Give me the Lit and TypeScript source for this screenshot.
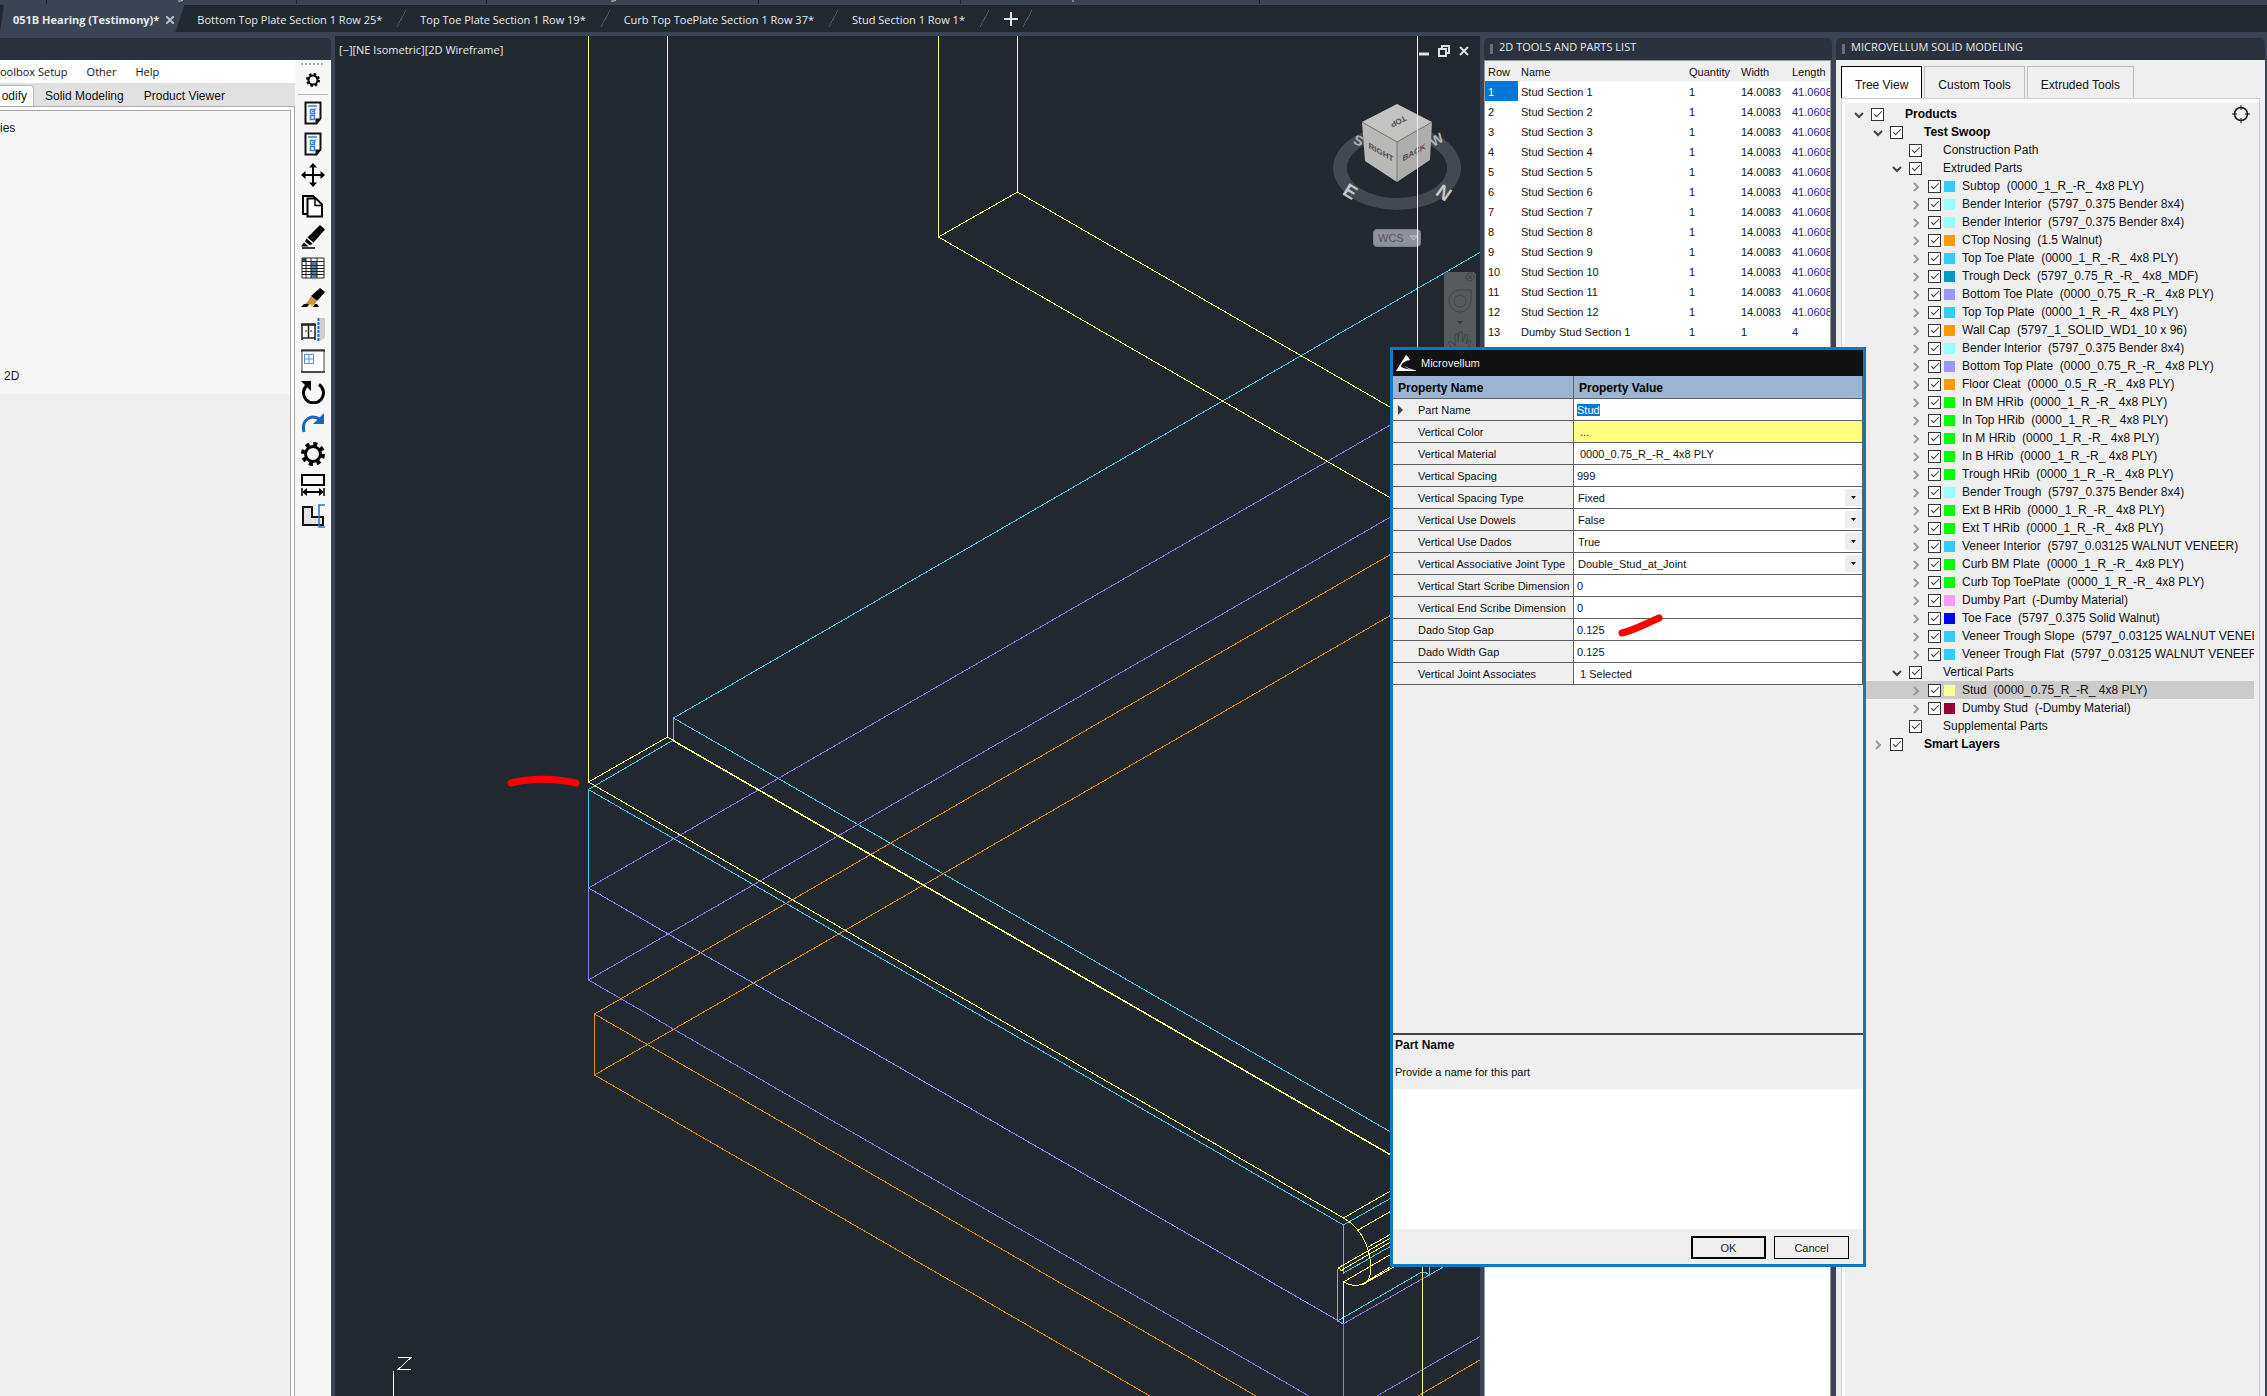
import { LitElement, html, css, svg, nothing } from "lit";
import { customElement, query } from "lit/decorators.js";
import { classMap } from "lit/directives/class-map.js";
import { styleMap } from "lit/directives/style-map.js";

/* ------------------------------------------------------------------ data */

const documents = [
  "Bottom Top Plate Section 1 Row 25*",
  "Top Toe Plate Section 1 Row 19*",
  "Curb Top ToePlate Section 1 Row 37*",
  "Stud Section 1 Row 1*",
];

type Part = [name: string, quantity: string, width: string, length: string];
const parts: Part[] = [
  ...Array.from({ length: 12 }, (_, i): Part => [`Stud Section ${i + 1}`, "1", "14.0083", "41.0608"]),
  ["Dumby Stud Section 1", "1", "1", "4"],
];

interface Node {
  level: number;
  label: string;
  color?: string;
  open?: boolean;
  leaf?: boolean;
  bold?: boolean;
  selected?: boolean;
}

const CYAN = "#33ccff";
const ICE = "#99ffff";
const ORANGE = "#ff9900";
const VIOLET = "#9999ff";
const GREEN = "#00ff00";
const part = (label: string, color: string, selected = false): Node => ({ level: 3, label, color, selected });

const tree: Node[] = [
  { level: 0, label: "Products", open: true, bold: true },
  { level: 1, label: "Test Swoop", open: true, bold: true },
  { level: 2, label: "Construction Path", leaf: true },
  { level: 2, label: "Extruded Parts", open: true },
  part("Subtop\u00a0 (0000_1_R_-R_ 4x8 PLY)", CYAN),
  part("Bender Interior\u00a0 (5797_0.375 Bender 8x4)", ICE),
  part("Bender Interior\u00a0 (5797_0.375 Bender 8x4)", ICE),
  part("CTop Nosing\u00a0 (1.5 Walnut)", ORANGE),
  part("Top Toe Plate\u00a0 (0000_1_R_-R_ 4x8 PLY)", CYAN),
  part("Trough Deck\u00a0 (5797_0.75_R_-R_ 4x8_MDF)", "#0099cc"),
  part("Bottom Toe Plate\u00a0 (0000_0.75_R_-R_ 4x8 PLY)", VIOLET),
  part("Top Top Plate\u00a0 (0000_1_R_-R_ 4x8 PLY)", CYAN),
  part("Wall Cap\u00a0 (5797_1_SOLID_WD1_10 x 96)", ORANGE),
  part("Bender Interior\u00a0 (5797_0.375 Bender 8x4)", ICE),
  part("Bottom Top Plate\u00a0 (0000_0.75_R_-R_ 4x8 PLY)", VIOLET),
  part("Floor Cleat\u00a0 (0000_0.5_R_-R_ 4x8 PLY)", ORANGE),
  part("In BM HRib\u00a0 (0000_1_R_-R_ 4x8 PLY)", GREEN),
  part("In Top HRib\u00a0 (0000_1_R_-R_ 4x8 PLY)", GREEN),
  part("In M HRib\u00a0 (0000_1_R_-R_ 4x8 PLY)", GREEN),
  part("In B HRib\u00a0 (0000_1_R_-R_ 4x8 PLY)", GREEN),
  part("Trough HRib\u00a0 (0000_1_R_-R_ 4x8 PLY)", GREEN),
  part("Bender Trough\u00a0 (5797_0.375 Bender 8x4)", ICE),
  part("Ext B HRib\u00a0 (0000_1_R_-R_ 4x8 PLY)", GREEN),
  part("Ext T HRib\u00a0 (0000_1_R_-R_ 4x8 PLY)", GREEN),
  part("Veneer Interior\u00a0 (5797_0.03125 WALNUT VENEER)", CYAN),
  part("Curb BM Plate\u00a0 (0000_1_R_-R_ 4x8 PLY)", GREEN),
  part("Curb Top ToePlate\u00a0 (0000_1_R_-R_ 4x8 PLY)", GREEN),
  part("Dumby Part\u00a0 (-Dumby Material)", "#ff99ff"),
  part("Toe Face\u00a0 (5797_0.375 Solid Walnut)", "#0000ff"),
  part("Veneer Trough Slope\u00a0 (5797_0.03125 WALNUT VENEER)", CYAN),
  part("Veneer Trough Flat\u00a0 (5797_0.03125 WALNUT VENEER)", CYAN),
  { level: 2, label: "Vertical Parts", open: true },
  part("Stud\u00a0 (0000_0.75_R_-R_ 4x8 PLY)", "#ffff99", true),
  part("Dumby Stud\u00a0 (-Dumby Material)", "#990033"),
  { level: 2, label: "Supplemental Parts", leaf: true },
  { level: 1, label: "Smart Layers", bold: true },
];

type Kind = "text" | "select" | "button" | "color";
const properties: [label: string, kind: Kind, value: string][] = [
  ["Part Name", "text", "Stud"],
  ["Vertical Color", "color", "..."],
  ["Vertical Material", "button", "0000_0.75_R_-R_ 4x8 PLY"],
  ["Vertical Spacing", "text", "999"],
  ["Vertical Spacing Type", "select", "Fixed"],
  ["Vertical Use Dowels", "select", "False"],
  ["Vertical Use Dados", "select", "True"],
  ["Vertical Associative Joint Type", "select", "Double_Stud_at_Joint"],
  ["Vertical Start Scribe Dimension", "text", "0"],
  ["Vertical End Scribe Dimension", "text", "0"],
  ["Dado Stop Gap", "text", "0.125"],
  ["Dado Width Gap", "text", "0.125"],
  ["Vertical Joint Associates", "button", "1 Selected"],
];

/* ----------------------------------------------------------------- icons */

const sheet = svg`
  <path d="M4.500 1.500h15v16l-4 5h-11z" fill="#fff" stroke="#111" stroke-width="2"/>
  <path d="M14.500 22.500v-5h5z" fill="#111"/>
  <path d="M7 5h9" stroke="#3b7fd4" stroke-width="1.500"/>
  <path d="M9.500 8.500h4v4h-4zM9.500 14.500h4v4h-4z" fill="none" stroke="#3b7fd4" stroke-width="1.500"/>
  <path d="M11 10l1 1 3-3.500" fill="none" stroke="#3b7fd4"/>`;

const toolIcons: [label: string, icon: unknown][] = [
  ["Product list", sheet],
  ["Part list", sheet],
  ["Move", svg`<path d="M12 2v20M2 12h20" stroke="#000" stroke-width="2"/>
    <path d="M12 0l4 4.500H8zM12 24l4-4.500H8zM0 12l4.500-4v8zM24 12l-4.500-4v8z"/>`],
  ["Copy", svg`<path d="M6 20H2V2h10l3 3" fill="none" stroke="#000" stroke-width="2"/>
    <path d="M6.500 4.500h8.500l6 6v12H6.500z" fill="#fff" stroke="#000" stroke-width="2"/>
    <path d="M14 5v6.500h7" fill="none" stroke="#000" stroke-width="1.500"/>`],
  ["Mark", svg`<path d="M19 0l5 4.500L12.500 17.500l-6-5z"/>
    <path d="M5.500 13.500l6 5-2.500 2-5-4z"/><path d="M3 17.500l4.500 4H0z"/>
    <path d="M1 23h13" stroke="#000" stroke-width="1.500"/>`],
  ["Table", svg`<path d="M1 2h22v20H1z" fill="#fff" stroke="#222"/>
    <path d="M10 5h6v17h-6z" fill="#5579a8"/>
    <path d="M1 2h4v3H1z" fill="#1f5a2d"/>
    <path d="M1 5.500h22M1 9.500h22M1 12.500h22M1 15.500h22M1 18.500h22M5 2v20M10 2v20M16 2v20" stroke="#222"/>`],
  ["Clean", svg`<path d="M19 1l5 4-8 9-6-5z"/>
    <path d="M10 9l6 5-3 4-9-1c3-2 4-5 6-8z" fill="#d98f3a"/>
    <path d="M0 20l3-3h5l-2 3zM12 20l2-3h2l2 3z"/><path d="M8 18l-1 2M11 18v2" stroke="#d98f3a"/>`],
  ["Cabinet", svg`<path d="M1 6h13v14H1zM7.500 6v14M0 7h15M1 20v2M14 20v2" fill="none" stroke="#222" stroke-width="1.500"/>
    <path d="M5 12v2M10 12v2" stroke="#222"/><path d="M19 0h5v20l-5 3z" fill="#cfcfcf"/>
    <path d="M17.500 0v24" stroke="#0d66b8" stroke-width="2" stroke-dasharray="3 1"/>`],
  ["Elevation", svg`<path d="M1 1h22v22H1z" fill="#fff" stroke="#444"/><path d="M0 1.500h24" stroke="#333" stroke-width="2"/>
    <path d="M0 23h24" stroke="#333" stroke-width="1.500"/>
    <path d="M3.500 5.500h9v9h-9zM8 5.500v9M3.500 10h9" fill="none" stroke="#4d93dd"/>`],
  ["Refresh", svg`<path d="M7 4.500A10 10 0 1 0 18 4.500" fill="none" stroke="#000" stroke-width="3"/>
    <path d="M0 1h10v10z"/>`],
  ["Redo", svg`<path d="M3 21C0 9 10 2 20 9" fill="none" stroke="#1a66bb" stroke-width="3"/>
    <path d="M23 2v11H12z" fill="#1a66bb"/>`],
  ["Options", svg`<circle cx="12" cy="12" r="7.500" fill="none" stroke="#000" stroke-width="3"/>
    <circle cx="12" cy="12" r="10" fill="none" stroke="#000" stroke-width="4" stroke-dasharray="4 3.854"/>`],
  ["Dimension", svg`<path d="M1 2h22v10H1z" fill="none" stroke="#000" stroke-width="2"/>
    <path d="M1 15v8M23 15v8" stroke="#000" stroke-width="1.500"/><path d="M3 19h18" stroke="#000" stroke-width="2"/>
    <path d="M1 19l5-4v8zM23 19l-5-4v8z"/>`],
  ["Extents", svg`<path d="M2 3h9v10h11v8H2z" fill="#e2e2e2" stroke="#111" stroke-width="2"/>
    <path d="M24 1h-6v22h6" fill="none" stroke="#2a74bd" stroke-width="1.500"/>`],
];

const wireframe = svg`
  <g class="wire violet">
    <path d="M588.500 888V980M588.500 888L1480 373.200M588.500 980L1480 465.300M588.500 980L1309 1396"/>
    <path d="M1343.500 1324V1396M1343 1324L1445 1266M1377 1396L1480 1336.500"/>
    <path class="bright" d="M588.500 888L1337 1320L1343 1324"/>
  </g>
  <g class="wire orange">
    <path d="M594.500 1014V1075M594.500 1014L1480 502.800M594.500 1075L1480 563.700"/>
    <path d="M594.500 1014L1256 1396M594.500 1075L1150 1396M1418 1396L1480 1360"/>
  </g>
  <g class="wire cyan">
    <path d="M673.500 740V718L1480 252.400M673.500 718L1400 1137.400M673.500 740L588.500 789.500V888"/>
    <path d="M588.500 789.500L1343.500 1225L1400 1193M1343.500 1225V1273L1400 1241"/>
    <path d="M1337.500 1269V1321L1420 1273L1425 1272L1429.500 1275V1260M1429.500 1275L1445 1266"/>
  </g>
  <g class="wire yellow">
    <path d="M588.500 36V782L667.500 737V36M938.500 36V237L1017.500 192V36"/>
    <path d="M938.500 237L1400 503.400M1017.500 192L1400 412.800M1417.500 36V360M1422.500 1260V1396"/>
    <path d="M588.500 782L1343.500 1218L1400 1185.500"/>
    <path d="M667.500 737L1400 1160M673 740.800L1400 1160.600"/>
    <path d="M1343.500 1218C1362 1228 1373 1251 1370 1275L1368 1281"/>
    <path d="M1358 1230L1400 1206M1338 1268L1400 1232.500M1340 1271L1400 1236.500M1368 1247L1400 1229"/>
    <path d="M1338 1268L1343 1271M1343.500 1323V1282C1352 1287 1360 1287 1369 1280L1400 1261M1343.500 1282L1400 1249M1362 1285L1400 1263.500"/>
  </g>
  <path class="ucs" d="M393.500 1371V1396M398 1357.500H411L398 1369.500H411"/>
  <path class="marker" d="M511 783C530 778 555 778 576 783"/>`;

const viewCube = svg`
  <path fill-rule="evenodd" fill="#434951"
    d="M0 64a64 42 0 1 0 128 0a64 42 0 1 0-128 0zM14 64a50 30 0 1 1 100 0a50 30 0 1 1-100 0z"/>
  <g fill="#b0b2b5" font-size="14" font-weight="700" text-anchor="middle">
    <text transform="translate(24 41) rotate(20)">S</text>
    <text transform="translate(106 40) rotate(-30)">W</text>
  </g>
  <path d="M29 18L64 38V78L32 57z" fill="#b9b9b8"/>
  <path d="M99 18L64 38V78L97 56z" fill="#adadac"/>
  <path d="M64 0L99 18L64 38L29 18z" fill="#c3c3c2"/>
  <path d="M29 18L64 38L99 18M64 38V78" fill="none" stroke="#77797b"/>
  <g fill="#4b4d50" font-size="8" font-weight="700" text-anchor="middle">
    <text transform="translate(48 51) skewY(29)">RIGHT</text>
    <text transform="translate(81 51) skewY(-29)">BACK</text>
    <text transform="translate(64 15) rotate(152)">TOP</text>
  </g>
  <g fill="#c4c6c8" font-size="19" font-weight="700" text-anchor="middle">
    <text transform="translate(14 93) rotate(32)">E</text>
    <text transform="translate(107 94) rotate(36)">N</text>
  </g>`;

/* -------------------------------------------------------------- elements */

@customElement("property-dialog")
export class PropertyDialog extends LitElement {
  @query("#property-0") first!: HTMLInputElement;

  static styles = css`
    :host {
      display: flex;
      flex-direction: column;
      box-sizing: border-box;
      border: 3px solid #1278bd;
      background: #efefef;
      color: #111;
      font: 11px/16px "Liberation Sans", Arial, sans-serif;
    }
    .title {
      display: flex;
      align-items: center;
      gap: 5px;
      height: 26px;
      padding-left: 3px;
      background: #121212;
      color: #eee;
    }
    .title h2 { margin: 0; font-size: 11px; font-weight: 400; }
    table { width: 100%; border-collapse: separate; border-spacing: 0; table-layout: fixed; }
    .name { width: 181px; }
    th, td { box-sizing: border-box; height: 22px; padding: 0; border: solid #5f5f5f; border-width: 0 1px 1px 0; }
    thead th { height: 23px; padding: 1px 0 0 5px; background: #9ab4d2; text-align: left; font-size: 12px; color: #000; }
    tbody th { text-align: left; font-weight: 400; white-space: nowrap; }
    tbody td { background: #fff; }
    .label { display: flex; align-items: center; }
    .mark { width: 20px; height: 10px; padding-right: 5px; box-sizing: content-box; }
    .field { display: grid; grid-template-columns: 1fr; align-items: center; height: 21px; }
    .field > * { grid-area: 1 / 1; }
    input, select, .value {
      box-sizing: border-box;
      width: 100%;
      height: 21px;
      margin: 0;
      padding: 0 3px;
      border: 0;
      border-radius: 0;
      outline: 0;
      background: none;
      color: inherit;
      font: inherit;
      text-align: left;
      appearance: none;
    }
    select { padding-left: 4px; }
    .value { padding-left: 6px; }
    .color .value { background: #ffff80; }
    input::selection { background: #0078d7; color: #fff; }
    .arrow { justify-self: end; width: 17px; height: 17px; background: #ededed; pointer-events: none; }
    .body { flex: 1; }
    .help { border-top: 2px solid #444; height: 54px; padding: 0 2px; }
    .help h3 { margin: 2px 0 11px; font-size: 12px; line-height: 16px; }
    .help p { margin: 0; }
    .preview { height: 140px; background: #fff; }
    .actions { display: flex; justify-content: flex-end; gap: 8px; padding: 7px 14px 5px; }
    .actions button {
      box-sizing: border-box;
      width: 75px;
      height: 23px;
      padding: 0;
      border: 1px solid #000;
      background: #efefef;
      color: #222;
      font: 11px/16px "Liberation Sans", Arial, sans-serif;
    }
    .actions .ok { border-width: 2px; }
  `;

  firstUpdated() {
    this.first.focus();
    this.first.select();
  }

  private field(id: string, kind: Kind, value: string) {
    if (kind === "text") return html`<input id=${id} type="text" .value=${value} />`;
    if (kind === "select")
      return html`<select id=${id}><option>${value}</option></select>
        <svg class="arrow" viewBox="0 0 17 17" aria-hidden="true"><path d="M6 7h5l-2.500 3z" fill="#111" /></svg>`;
    return html`<button id=${id} class="value">${value}</button>`;
  }

  render() {
    return html`
      <div class="title">
        <svg width="20" height="18" viewBox="0 0 20 18" aria-hidden="true">
          <path d="M0 17L10 1Q12 2 14 6Q9 7 7 11Q11 14 20 16.500L20 17z" fill="#fff" />
          <path d="M13 6Q5 8 5 13Q9 15 16 16Q9 14 8 11Q9 8 13 6z" fill="#121212" />
        </svg>
        <h2>Microvellum</h2>
      </div>
      <table>
        <thead><tr><th class="name">Property Name</th><th>Property Value</th></tr></thead>
        <tbody>
          ${properties.map(([label, kind, value], i) => html`
            <tr>
              <th scope="row">
                <label class="label" for="property-${i}">
                  <svg class="mark" viewBox="0 0 20 10" aria-hidden="true">
                    ${i === 0 ? svg`<path d="M5 0l5 5-5 5z" fill="#444"/>` : nothing}
                  </svg>
                  <span class="caption">${label}</span>
                </label>
              </th>
              <td><div class=${classMap({ field: true, color: kind === "color" })}>${this.field(`property-${i}`, kind, value)}</div></td>
            </tr>`)}
        </tbody>
      </table>
      <div class="body"></div>
      <div class="help"><h3>Part Name</h3><p>Provide a name for this part</p></div>
      <div class="preview"></div>
      <div class="actions"><button class="ok">OK</button><button>Cancel</button></div>
    `;
  }
}

@customElement("product-tree")
export class ProductTree extends LitElement {
  static styles = css`
    :host { display: block; color: #111; font: 12px/18px "Liberation Sans", Arial, sans-serif; }
    ul { margin: 0; padding: 0; list-style: none; }
    .row { display: flex; align-items: center; height: 18px; overflow: hidden; white-space: nowrap; }
    .level-0 { padding-left: 5px; }
    .level-1 { padding-left: 24px; }
    .level-2 { padding-left: 43px; }
    .level-3 { padding-left: 62px; }
    .selected { background: #cbcbcb; }
    .bold { font-weight: 700; color: #000; }
    .chevron { flex: none; width: 16px; height: 16px; margin-right: 4px; fill: none; stroke: #999; stroke-width: 2; }
    .open { stroke: #444; }
    label { display: flex; align-items: center; }
    input {
      flex: none;
      display: grid;
      place-items: center;
      box-sizing: border-box;
      width: 13px;
      height: 13px;
      margin: 0 3px 0 0;
      border: 1px solid #333;
      background: #fff;
      appearance: none;
    }
    input:checked::before {
      content: "";
      width: 7px;
      height: 3px;
      margin-top: -3px;
      border: solid #333;
      border-width: 0 0 1px 1px;
      transform: rotate(-45deg);
    }
    .swatch { flex: none; width: 11px; height: 11px; margin-right: 7px; }
  `;

  render() {
    return html`<ul>
      ${tree.map((node) => html`
        <li class=${classMap({ row: true, [`level-${node.level}`]: true, selected: !!node.selected, bold: !!node.bold })}>
          <svg class=${classMap({ chevron: true, open: !!node.open })} viewBox="0 0 16 16" aria-hidden="true">
            ${node.leaf ? nothing : node.open ? svg`<path d="M4 7l4 4 4-4"/>` : svg`<path d="M6 5l4 4-4 4"/>`}
          </svg>
          <label>
            <input type="checkbox" checked />
            <span class="swatch" style=${styleMap({ background: node.color ?? "none" })}></span>
            <span class="caption">${node.label}</span>
          </label>
        </li>`)}
    </ul>`;
  }
}

@customElement("app-root")
export class AppRoot extends LitElement {
  static styles = css`
    :host {
      position: relative;
      display: flex;
      flex-direction: column;
      height: 100vh;
      overflow: hidden;
      background: #3b4453;
      color: #e8eaed;
      font: 11px/16px "Open Sans", "Noto Sans", sans-serif;
    }
    button { margin: 0; padding: 0; border: 0; background: none; color: inherit; font: inherit; }
    .ribbon { flex: none; width: 100%; height: 5px; }
    .documents { flex: none; display: flex; height: 27px; background: #22282f; }
    .document {
      display: flex;
      align-items: center;
      padding: 2px 25px 0 13px;
      white-space: nowrap;
      background: linear-gradient(118deg, transparent 47%, #4a515b 47%, #4a515b 53%, transparent 53%) right 1px center / 9px 17px no-repeat;
    }
    .active {
      gap: 7px;
      padding: 2px 10px 0 13px;
      background: #3b4453;
      clip-path: polygon(4px 0, 100% 0, calc(100% - 9px) 100%, 0 100%);
      font-weight: 700;
    }
    .close { display: grid; width: 8px; }
    .add { display: grid; place-items: center; padding: 0 15px 0 14px; }
    .workspace { flex: 1; min-height: 0; display: flex; gap: 4px; padding-right: 2px; }
    .dock { display: flex; flex-direction: column; padding-top: 6px; box-sizing: border-box; }
    .caption-bar {
      flex: none;
      display: flex;
      align-items: flex-start;
      gap: 6px;
      height: 22px;
      padding: 1px 0 0 6px;
      box-sizing: border-box;
      border-radius: 5px 5px 0 0;
      background: #2b313d;
    }
    .caption-bar h2 { margin: 0; font-size: 11px; line-height: 16px; font-weight: 400; }
    .grip { width: 3px; height: 10px; margin-top: 5px; background: radial-gradient(#a9adb4 40%, transparent 60%) 0 0 / 2px 2px; }

    /* toolbox */
    .toolbox { width: 331px; color: #111; }
    .toolbox .caption-bar { border-radius: 0 5px 0 0; }
    .toolbox-body { flex: 1; display: flex; background: #fff; }
    .pages { flex: 1; display: flex; flex-direction: column; }
    .menu { display: flex; gap: 19px; height: 23px; align-items: center; }
    .page-tabs { display: flex; height: 23px; background: #e1e1e1; font: 12px/16px "Liberation Sans", Arial, sans-serif; }
    .page-tabs button { display: flex; align-items: center; padding: 3px 10px 0; }
    .page-tabs .current { width: 34px; box-sizing: border-box; margin: 2px 1px 0 0; padding: 0 6px 0 0; justify-content: flex-end; background: #fff; border: 1px solid #b5b5b5; border-width: 1px 1px 0 0; border-radius: 0 4px 0 0; }
    .page-outer { flex: 1; display: flex; padding: 3px 3px 0 0; border: 1px solid #a8a8a8; border-width: 1px 1px 0 0; }
    .page { flex: 1; display: flex; flex-direction: column; border: 1px solid #a8a8a8; border-width: 1px 1px 0 0; background: linear-gradient(#f7f7f7 283px, #efefef 283px); font: 12px/16px "Liberation Sans", Arial, sans-serif; }
    .page .group { height: 257px; box-sizing: border-box; padding: 9px 0 0; }
    .page .option { padding-left: 4px; }
    .tools { width: 36px; display: flex; flex-direction: column; align-items: center; background: #f7f7f7; }
    .tools .dots { width: 24px; height: 2px; margin-top: 3px; background: linear-gradient(90deg, #aaa 50%, transparent 50%) 0 0 / 4px 2px; }
    .tools .settings { display: grid; place-items: center; width: 30px; height: 30px; border-bottom: 1px solid #bbb; margin-bottom: 2px; }
    .tools .tool { display: grid; place-items: center; width: 30px; height: 31px; }

    /* viewport */
    .viewport { position: relative; flex: 1; min-width: 0; margin-top: 4px; overflow: hidden; background: #22282f; }
    .drawing { position: absolute; inset: 0; width: 100%; height: 100%; }
    .view-label { position: absolute; left: 4px; top: 6px; white-space: nowrap; }
    .wire { fill: none; stroke-width: 1; shape-rendering: crispEdges; }
    .yellow { stroke: #ffff80; }
    .cyan { stroke: #50c4e0; }
    .violet { stroke: #8878e0; }
    .orange { stroke: #e08820; }
    .bright { stroke: #8090ff; }
    .ucs { fill: none; stroke: #fff; shape-rendering: crispEdges; }
    .marker { fill: none; stroke: #f00; stroke-width: 7; stroke-linecap: round; }
    .cube { position: absolute; right: 19px; top: 68px; width: 128px; height: 108px; font-family: "Liberation Sans", Arial, sans-serif; }
    .wcs {
      position: absolute; right: 59px; top: 193px; width: 48px; height: 18px;
      display: flex; align-items: center; gap: 5px; padding-left: 4px;
      border: 1px solid #7d808a; border-radius: 4px; background: #8f919b; color: #55575f;
      font: 11px/16px "Liberation Sans", Arial, sans-serif; box-sizing: border-box;
    }
    .nav { position: absolute; right: 4px; top: 236px; width: 32px; height: 180px; }
    .window-buttons { position: absolute; right: 10px; top: 7px; display: flex; gap: 8px; }
    .window-buttons button { display: grid; }

    /* parts list */
    .parts { width: 348px; }
    .parts-body { flex: 1; margin-right: 1px; border: 1px solid #9a9a9a; border-width: 1px 1px 0 1px; background: #fff; overflow: hidden; }
    .parts-table { width: 100%; table-layout: fixed; border-collapse: collapse; color: #111; font: 11px/16px "Liberation Sans", Arial, sans-serif; }
    .parts-table th, .parts-table td { height: 18px; padding: 2px 0 0 3px; text-align: left; font-weight: 400; white-space: nowrap; overflow: hidden; }
    .parts-table thead { background: #efefef; }
    .parts-table .c-row { width: 30px; }
    .parts-table .c-name { width: 165px; }
    .parts-table .c-qty { width: 49px; }
    .parts-table .c-width { width: 48px; }
    .parts-table .length { color: #1c1c96; }
    .parts-table .picked { background: #0078d7; color: #fff; }

    /* solid modeling */
    .modeling { width: 429px; }
    .modeling-body { flex: 1; min-height: 0; display: flex; flex-direction: column; padding: 6px 5px 0; background: #efefef; color: #111; }
    .view-tabs { display: flex; gap: 2px; font: 12px/16px "Liberation Sans", Arial, sans-serif; }
    .view-tabs button { height: 32px; padding: 4px 13px 0; border: 1px solid #bdbdbd; border-bottom: 0; background: #efefef; }
    .view-tabs .current { background: #fff; border-color: #000; }
    .tree-page { position: relative; flex: 1; min-height: 0; padding: 6px 5px 0 4px; border: 1px solid #ccc; border-bottom: 0; background: #efefef; box-shadow: inset 3px 4px #fff; }
    .target { position: absolute; right: 9px; top: 6px; display: grid; }

    .dialog { position: absolute; right: 401px; top: 347px; width: 476px; height: 920px; }
    .annotation { position: absolute; right: 604px; top: 612px; width: 46px; height: 26px; }
  `;

  private readonly small = (size: number, body: unknown) => html`
    <svg width=${size} height=${size} viewBox="0 0 24 24" aria-hidden="true">${body}</svg>`;

  private toolbox() {
    return html`
      <section class="dock toolbox">
        <div class="caption-bar"></div>
        <div class="toolbox-body">
          <div class="pages">
            <nav class="menu"><button>oolbox Setup</button><button>Other</button><button>Help</button></nav>
            <div class="page-tabs">
              <button class="current">odify</button><button>Solid Modeling</button><button>Product Viewer</button>
            </div>
            <div class="page-outer">
              <div class="page"><div class="group">ies</div><div class="option">2D</div></div>
            </div>
          </div>
          <div class="tools">
            <div class="dots"></div>
            <button class="settings" aria-label="Settings">
              <svg width="14" height="14" viewBox="0 0 14 14" aria-hidden="true">
                <circle cx="7" cy="7" r="4.500" fill="none" stroke="#000" stroke-width="2" />
                <circle cx="7" cy="7" r="6" fill="none" stroke="#000" stroke-width="2" stroke-dasharray="2.400 2.312" />
              </svg>
            </button>
            ${toolIcons.map(([label, icon]) => html`<button class="tool" aria-label=${label}>${this.small(24, icon)}</button>`)}
          </div>
        </div>
      </section>`;
  }

  private viewport() {
    return html`
      <main class="viewport">
        <svg class="cube" viewBox="0 0 128 108" role="img" aria-label="View cube">${viewCube}</svg>
        <button class="wcs">WCS
          <svg width="9" height="7" viewBox="0 0 9 7" aria-hidden="true"><path d="M1 1h7L4.500 5z" fill="none" stroke="#c9cad0" /></svg>
        </button>
        <svg class="drawing" viewBox="335 36 1145 1360" preserveAspectRatio="xMinYMin slice" role="img" aria-label="Wireframe">${wireframe}</svg>
        <svg class="nav" viewBox="0 0 32 180" role="img" aria-label="Navigation bar">
          <rect width="32" height="190" rx="3" fill="#585b5e" />
          <g fill="none" stroke="#404347">
            <path d="M26 1a4 4 0 1 0 .1 0M24 3l4 4M28 3l-4 4" />
            <path d="M27 29a11 11 0 1 1-11-11h11z" /><circle cx="16" cy="29" r="6" />
            <path d="M7 75l-3-5 3-1 4 5V62h3v8l1-10h3l1 10 2-8 3 1-2 9 3-4 2 1-5 11z" />
          </g>
          <path d="M13 49h6l-3 3z" fill="#33363a" />
        </svg>
        <div class="view-label">[−][NE Isometric][2D Wireframe]</div>
        <div class="window-buttons">
          <button aria-label="Minimize"><svg width="12" height="15" viewBox="0 0 12 15"><path d="M1 11h10" stroke="#dfe1e4" stroke-width="3" /></svg></button>
          <button aria-label="Restore"><svg width="12" height="15" viewBox="0 0 12 15"><path d="M1 6h7v7H1zM4 5V3h7v7H9" fill="none" stroke="#dfe1e4" stroke-width="2" /></svg></button>
          <button aria-label="Close"><svg width="12" height="15" viewBox="0 0 12 15"><path d="M2 4l8 8M10 4l-8 8" stroke="#dfe1e4" stroke-width="2" /></svg></button>
        </div>
      </main>`;
  }

  private partsList() {
    return html`
      <section class="dock parts">
        <div class="caption-bar"><span class="grip"></span><h2>2D TOOLS AND PARTS LIST</h2></div>
        <div class="parts-body">
          <table class="parts-table">
            <thead>
              <tr>
                <th class="c-row">Row</th><th class="c-name">Name</th><th class="c-qty">Quantity</th>
                <th class="c-width">Width</th><th>Length</th>
              </tr>
            </thead>
            <tbody>
              ${parts.map(([name, quantity, width, length], i) => html`
                <tr>
                  <td class=${classMap({ picked: i === 0 })}>${i + 1}</td>
                  <td>${name}</td><td>${quantity}</td><td>${width}</td><td class="length">${length}</td>
                </tr>`)}
            </tbody>
          </table>
        </div>
      </section>`;
  }

  private modeling() {
    return html`
      <section class="dock modeling">
        <div class="caption-bar"><span class="grip"></span><h2>MICROVELLUM SOLID MODELING</h2></div>
        <div class="modeling-body">
          <div class="view-tabs">
            <button class="current">Tree View</button><button>Custom Tools</button><button>Extruded Tools</button>
          </div>
          <div class="tree-page">
            <product-tree></product-tree>
            <button class="target" aria-label="Locate">
              <svg width="18" height="18" viewBox="0 0 18 18" aria-hidden="true">
                <path d="M9 0v5M9 13v5M0 9h5M13 9h5" stroke="#111" />
                <circle cx="9" cy="9" r="6.500" fill="none" stroke="#111" stroke-width="1.500" />
              </svg>
            </button>
          </div>
        </div>
      </section>`;
  }

  render() {
    return html`
      <svg class="ribbon" aria-hidden="true">
        <path d="M46.500 0v4M296.500 0v4M486.500 0v4M758.500 0v4M960.500 0v4M1259.500 0v4" stroke="#20252c" />
        <path d="M178 1h3l2-1M611 1h3l2-1M1073 0v2" fill="none" stroke="#c5c8cd" />
      </svg>
      <nav class="documents">
        <div class="document active">
          <span class="caption">051B Hearing (Testimony)*</span>
          <button class="close" aria-label="Close drawing">
            <svg width="8" height="8" viewBox="0 0 8 8"><path d="M0 0l8 8M8 0L0 8" stroke="#b9bec6" stroke-width="2" /></svg>
          </button>
        </div>
        ${documents.map((name) => html`<button class="document">${name}</button>`)}
        <button class="document add" aria-label="New drawing">
          <svg width="14" height="14" viewBox="0 0 14 14"><path d="M7 0v14M0 7h14" stroke="#e3e5e8" stroke-width="2" /></svg>
        </button>
      </nav>
      <div class="workspace">${this.toolbox()}${this.viewport()}${this.partsList()}${this.modeling()}</div>
      <property-dialog class="dialog" role="dialog" aria-label="Microvellum"></property-dialog>
      <svg class="annotation" viewBox="0 0 46 26" aria-hidden="true"><path class="marker" d="M5 21C18 18 28 12 42 6" /></svg>
    `;
  }
}
